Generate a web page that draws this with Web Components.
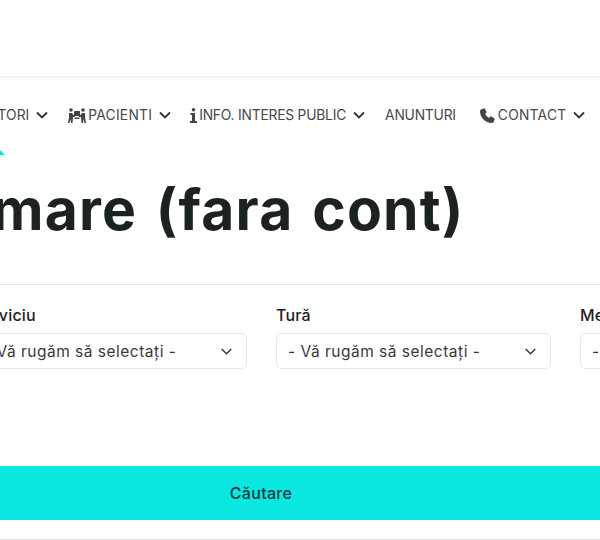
<!DOCTYPE html>
<html lang="ro">
<head>
<meta charset="utf-8">
<title>Programare</title>
<style>
    html, body { margin: 0; background: #fff; overflow: hidden; }
    body { width: 600px; height: 540px; font-family: Inter, "Liberation Sans", sans-serif; }
    main { margin-left: -100px; width: 800px; }
</style>
</head>
<body>
<main>
    <site-nav>
        <nav-item caret>DOCTORI</nav-item>
        <nav-item caret icon="people" style="letter-spacing: .25px; margin-right: 19px">PACIENTI</nav-item>
        <nav-item caret icon="info" style="letter-spacing: -.2px">INFO. INTERES PUBLIC</nav-item>
        <nav-item style="letter-spacing: -.2px; margin-right: 24px">ANUNTURI</nav-item>
        <nav-item caret icon="phone" style="letter-spacing: .25px">CONTACT</nav-item>
    </site-nav>
    <page-title>Programare (fara cont)</page-title>
    <search-form>
        <form-select label="Serviciu"></form-select>
        <form-select label="Tură"></form-select>
        <form-select label="Medic"></form-select>
    </search-form>
    <search-button>Căutare</search-button>
    <page-end></page-end>
</main>
<script>
const ICONS = {
    people: `<svg width="18" height="15" viewBox="0 0 18 15" fill="#444"><circle cx="3" cy="2" r="1.8"/><circle cx="15" cy="2" r="1.8"/><rect x="6" y="3" width="6" height="5" rx=".5"/><path d="M1 5h3l2 2.500h1V9H5L4.500 15H3L2.700 11 1.500 15H0l1-6zM17 5h-3l-2 2.500h-1V9h2l.5 6H15l.3-4 1.200 4H18l-1-6z"/><rect x="6.500" y="9.500" width="5" height="1.500"/></svg>`,
    info: `<svg width="7" height="15" viewBox="0 0 7 15" fill="#444"><circle cx="3.500" cy="1.800" r="1.800"/><path d="M.5 5h4.500v8H7v2H0v-2h2V7H.5z"/></svg>`,
    phone: `<svg width="16" height="15" viewBox="0 0 16 15" fill="#444"><path d="M3.300.4 1 1.400C.4 1.700 0 2.300 0 3c0 6.600 5.400 12 12 12 .7 0 1.300-.4 1.600-1l1-2.300c.2-.5 0-1.100-.4-1.400l-2.700-1.800c-.4-.3-1-.2-1.300.2l-1 1.200C7.300 9 6 7.700 5.100 5.800l1.200-1c.4-.3.5-.9.200-1.300L4.700.8C4.400.400 3.800.2 3.300.4z"/></svg>`
};

class SiteNav extends HTMLElement {
    connectedCallback() {
        this.attachShadow({ mode: 'open' });
        this.shadowRoot.innerHTML = `
            <style>
                :host { display: block; padding-top: 76px; }
                .bar {
                    position: relative;
                    border-top: 2px solid #f5f5f5;
                    box-sizing: border-box;
                    height: 76px;
                    display: flex;
                    align-items: center;
                    padding-left: 67px;
                }
                .mark {
                    position: absolute;
                    left: 89px; bottom: -3px;
                    width: 0; height: 0;
                    border-left: 8px solid transparent;
                    border-right: 8px solid transparent;
                    border-bottom: 8px solid #0ae6e0;
                }
            </style>
            <div class="bar"><slot></slot><div class="mark"></div></div>
        `;
    }
}

class NavItem extends HTMLElement {
    connectedCallback() {
        const icon = this.getAttribute('icon');
        const caret = this.hasAttribute('caret');
        this.attachShadow({ mode: 'open' });
        this.shadowRoot.innerHTML = `
            <style>
                :host {
                    display: flex;
                    align-items: center;
                    margin-right: 20px;
                    font-size: 13.800px;
                    color: #484848;
                    white-space: nowrap;
                }
                .icon { display: flex; margin-right: 2px; }
                .caret { margin-left: 7px; display: flex; }
            </style>
            ${icon ? `<span class="icon">${ICONS[icon]}</span>` : ''}
            <slot></slot>
            ${caret ? `<span class="caret"><svg width="12" height="8" viewBox="0 0 12 8" fill="none" stroke="#333" stroke-width="1.800"><path d="M1 1.500l5 5 5-5"/></svg></span>` : ''}
        `;
    }
}

class PageTitle extends HTMLElement {
    connectedCallback() {
        this.attachShadow({ mode: 'open' });
        this.shadowRoot.innerHTML = `
            <style>
                :host {
                    display: block;
                    height: 133px;
                    box-sizing: border-box;
                    margin-left: -101px;
                    border-bottom: 1px solid #e4e4e4;
                    padding-top: 20px;
                    font: 700 57px/76px Inter, sans-serif;
                    letter-spacing: 1.200px;
                    word-spacing: 4px;
                    color: #1c2221;
                    white-space: nowrap;
                }
            </style>
            <slot></slot>
        `;
    }
}

class SearchForm extends HTMLElement {
    connectedCallback() {
        this.attachShadow({ mode: 'open' });
        this.shadowRoot.innerHTML = `
            <style>
                :host {
                    display: grid;
                    grid-template-columns: repeat(3, 275px);
                    column-gap: 29px;
                    padding: 20px 0 0 72px;
                    height: 181px;
                    box-sizing: border-box;
                }
            </style>
            <slot></slot>
        `;
    }
}

class FormSelect extends HTMLElement {
    connectedCallback() {
        this.attachShadow({ mode: 'open' });
        this.shadowRoot.innerHTML = `
            <style>
                :host { display: block; color: #222; }
                label { display: block; font-size: 16px; font-weight: 500; letter-spacing: .2px; line-height: 20px; margin-bottom: 8px; }
                .box {
                    height: 36px;
                    box-sizing: border-box;
                    border: 1px solid #e6e6e6;
                    border-radius: 6px;
                    display: flex;
                    align-items: center;
                    justify-content: space-between;
                    padding: 0 14px 0 11px;
                    font-size: 15.500px;
                    letter-spacing: .5px;
                    color: #3a3a3a;
                }
            </style>
            <label>${this.getAttribute('label')}</label>
            <div class="box">
                <span>- Vă rugăm să selectați -</span>
                <svg width="11" height="7" viewBox="0 0 11 7" fill="none" stroke="#333" stroke-width="1.300"><path d="M.7 1l4.800 4.800L10.300 1"/></svg>
            </div>
        `;
    }
}

class SearchButton extends HTMLElement {
    connectedCallback() {
        this.attachShadow({ mode: 'open' });
        this.shadowRoot.innerHTML = `
            <style>
                :host {
                    display: flex;
                    align-items: center;
                    justify-content: center;
                    width: 722px;
                    height: 54px;
                    background: #0ae6e0;
                    color: #173a42;
                    font-size: 16px;
                    font-weight: 500;
                    letter-spacing: .3px;
                }
            </style>
            <slot></slot>
        `;
    }
}

class PageEnd extends HTMLElement {
    connectedCallback() {
        this.attachShadow({ mode: 'open' });
        this.shadowRoot.innerHTML = `
            <style>
                :host { display: block; margin-top: 19px; border-top: 1px solid #e0e0e0; }
            </style>
        `;
    }
}

customElements.define('site-nav', SiteNav);
customElements.define('nav-item', NavItem);
customElements.define('page-title', PageTitle);
customElements.define('search-form', SearchForm);
customElements.define('form-select', FormSelect);
customElements.define('search-button', SearchButton);
customElements.define('page-end', PageEnd);
</script>
</body>
</html>
